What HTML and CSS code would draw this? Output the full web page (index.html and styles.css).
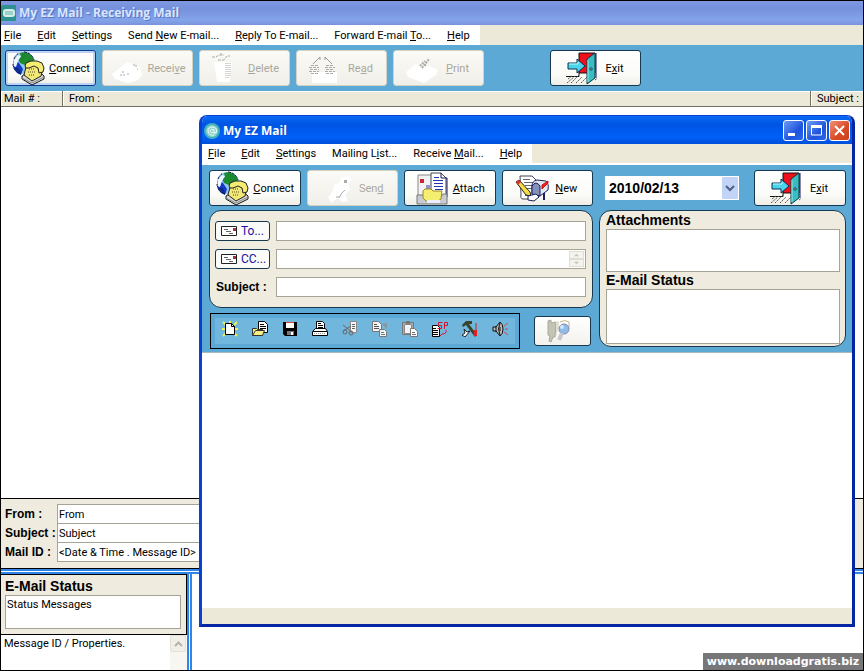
FILE: index.html
```html
<!DOCTYPE html>
<html lang="en">
<head>
<meta charset="utf-8">
<title>My EZ Mail - Receiving Mail</title>
<link rel="stylesheet" href="styles.css">
</head>
<body>
<svg class="sprite" aria-hidden="true">
  <symbol id="connect" viewBox="0 0 42 34">
    <circle cx="18" cy="12" r="11" fill="#8fc4ee"/>
    <path d="M8 9q-3 8 3 13l4 2 2-6-4-6z" fill="#1438c8"/>
    <path d="M14 2q8-3 13 5l1 6-5-2-4 3-5-2-2-4 3-2z" fill="#1c8a2c"/>
    <path d="M8 9l4-5 3 1-3 5-2 6-3-1z" fill="#eef6ff"/>
    <path d="M9 18l3 2 1 3 2 0-1-4-3-3z" fill="#0c2a80"/>
    <path d="M18 1a11 11 0 0 1 10 8M7 13a11 11 0 0 0 8 10M8 8a11 11 0 0 1 5-6" fill="none" stroke="#101840" stroke-dasharray="3 1"/>
    <path d="M16 25l13-8 9 8v3l-12 6-10-6z" fill="#d9d9d9" stroke="#111"/>
    <path d="M16 27l10 5 12-6" fill="none" stroke="#888"/>
    <path d="M18 24l2-8 9-3 7 8-1 4-9 5z" fill="#f2e878" stroke="#222"/>
    <path d="M19 15l1-3 5-2h6l5 2 2 5-1 4-4 1-1-5-4-2-5 2-3 0z" fill="#f5ec72" stroke="#222"/>
    <path d="M23 18h6M22 21h7M23 24h6" stroke="#54491a" stroke-dasharray="1 1"/>
  </symbol>
  <symbol id="exit" viewBox="0 0 46 34">
    <path d="M29 2h17v25h-3V4z" fill="#8d86ad"/>
    <path d="M28 2h16v20H28z" fill="#f0101c" stroke="#111"/>
    <path d="M15 25.500h13v-4M15 25.500" fill="none" stroke="#111"/>
    <path d="M17 28l4-3M16 32l8-7M20 32l8-8M25 32l6-6M30 32l6-6M44 29l4-3" stroke="#555" stroke-dasharray="2 1"/>
    <path d="M36 8l8-6v25l-8 6z" fill="#3bbcc0" stroke="#0b3c48"/>
    <path d="M37 9v22" stroke="#8ef0f0"/>
    <path d="M39 17h2v2h-2z" fill="#fff" stroke="#145"/>
    <path d="M17 12h9V8l8 7-8 7v-4h-9z" fill="#49d5ea" stroke="#0b2f50"/>
    <path d="M18 13h9v-2" fill="none" stroke="#b8f8ff"/>
  </symbol>
  <symbol id="letter" viewBox="0 0 17 10">
    <path d="M.5.5h15v9H.5z" fill="#fff" stroke="#222"/>
    <path d="M12 2h3v3h-3z" fill="#a33"/>
    <path d="M3 3.500h4M5 5.500h5M8 7.500h4" stroke="#666"/>
  </symbol>
</svg>

<main class="app">
  <header class="titlebar titlebar-inactive">
    <svg class="app-icon" viewBox="0 0 16 16"><path d="M1 0h14v16H0V2z" fill="#2f918f"/><rect x="2" y="4" width="12" height="8" rx="3" fill="#d3eeea"/><path d="M4 7h8M4 9h8" stroke="#6ab1aa"/></svg>
    <h1>My EZ Mail - Receiving Mail</h1>
  </header>
  <nav class="menubar">
    <div class="menu">
      <a href="#"><u>F</u>ile</a><a href="#"><u>E</u>dit</a><a href="#"><u>S</u>ettings</a><a href="#">Send <u>N</u>ew E-mail...</a><a href="#"><u>R</u>eply To E-mail...</a><a href="#">Forward E-mail <u>T</u>o...</a><a href="#"><u>H</u>elp</a>
    </div>
  </nav>
  <div class="toolbar">
    <button class="tool tool-default"><svg><use href="#connect"/></svg><span><u>C</u>onnect</span></button>
    <button class="tool" disabled><svg viewBox="0 0 42 34"><path d="M9 23l9-7 6-5 13 5 2 8-4 5-10 3-13-4z" fill="#fff"/><path d="M17 24h5M19 21h3M24 23h3M30 14h3v2M34 18h1" stroke="#aaa" stroke-dasharray="2 1" fill="none"/></svg><span>Recei<u>v</u>e</span></button>
    <button class="tool" disabled><svg viewBox="0 0 42 34"><path d="M14 11h18l-2 20H17z" fill="#fff"/><path d="M12 6h4l3-2h5M18 9h6l3-4h3M20 3h2" stroke="#aaa" stroke-dasharray="3 1" fill="none"/><path d="M26 12v16M28 12v16M30 12v14" stroke="#aaa" stroke-dasharray="1 1"/></svg><span><u>D</u>elete</span></button>
    <button class="tool" disabled><svg viewBox="0 0 42 34"><path d="M15 21h25v11H15z" fill="#fff"/><path d="M16 13l7-7v3M28 9V6l7 7" stroke="#999" fill="none"/><path d="M14 14.500h8M12 16.500h10M13 18.500h9M12 20.500h10M14 22.500h8M29 14.500h8M28 16.500h10M29 18.500h8M28 20.500h10M29 22.500h8" stroke="#aaa" stroke-dasharray="3 1"/></svg><span>Re<u>a</u>d</span></button>
    <button class="tool" disabled><svg viewBox="0 0 42 34"><path d="M12 21l10-8 6 3 8-1 8 4-2 5-12 8-16-6z" fill="#fff"/><path d="M28 17l7-9M26 15l5-5M30 14h3" stroke="#aaa" stroke-width="2" stroke-dasharray="2 1"/></svg><span><u>P</u>rint</span></button>
    <button class="tool tool-apart"><svg><use href="#exit" width="46" height="34"/></svg><span>E<u>x</u>it</span></button>
  </div>
  <section class="list">
    <table>
      <thead><tr><th class="col-num">Mail # :</th><th>From :</th><th class="col-subject">Subject :</th></tr></thead>
    </table>
  </section>
  <section class="details">
    <label for="d-from">From :</label><input id="d-from" value="From" readonly>
    <label for="d-subject">Subject :</label><input id="d-subject" value="Subject" readonly>
    <label for="d-id">Mail ID :</label><input id="d-id" value="&lt;Date &amp; Time . Message ID&gt;" readonly>
  </section>
  <section class="reader">
    <div class="side">
      <div class="status">
        <label class="heading" for="status">E-Mail Status</label>
        <textarea id="status" readonly>Status Messages</textarea>
      </div>
      <div class="props">
        <p>Message ID / Properties.</p>
        <div class="scroll"><button aria-label="Scroll up"><svg viewBox="0 0 9 6"><path d="M1 5l3.500-3.500L8 5" fill="none" stroke="#b4b4a8" stroke-width="2"/></svg></button></div>
      </div>
    </div>
    <div class="message"></div>
  </section>
  <footer class="watermark">www.downloadgratis.biz</footer>
</main>

<section class="window">
  <header class="titlebar">
    <svg class="app-icon" viewBox="0 0 16 16"><circle cx="8" cy="8" r="8" fill="#43b0bd"/><circle cx="8" cy="8" r="6" fill="#8cd3cc"/><path d="M10 6v4h2q2-5-3-6-5 0-5 4 1 5 6 4M10 7q-3-2-4 1 1 3 4 1" fill="none" stroke="#eefcf8"/></svg>
    <h2>My EZ Mail</h2>
    <div class="caption-buttons">
      <button aria-label="Minimize"><svg viewBox="0 0 19 19"><path d="M4 12h7v3H4z" fill="#fff"/></svg></button>
      <button aria-label="Maximize"><svg viewBox="0 0 19 19"><path d="M4.500 5h10v9h-10z" fill="none" stroke="#fff"/><path d="M4 4h11v3H4z" fill="#fff"/></svg></button>
      <button class="close" aria-label="Close"><svg viewBox="0 0 19 19"><path d="M5 5l9 9M14 5l-9 9" stroke="#fff" stroke-width="2"/></svg></button>
    </div>
  </header>
  <nav class="menubar menubar-lined">
    <div class="menu">
      <a href="#"><u>F</u>ile</a><a href="#"><u>E</u>dit</a><a href="#"><u>S</u>ettings</a><a href="#">Mailing L<u>i</u>st...</a><a href="#">Receive <u>M</u>ail...</a><a href="#"><u>H</u>elp</a>
    </div>
  </nav>
  <div class="compose">
    <div class="compose-main">
      <div class="tools">
        <button class="tool"><svg><use href="#connect"/></svg><span><u>C</u>onnect</span></button>
        <button class="tool" disabled><svg viewBox="0 0 42 34"><path d="M20 26l5-6 1-6 5-2 2-5 8-2 3 4-4 4 2 6-5 5 3 6-6 1-4-4-7 5z" fill="#fff"/><path d="M36 9h3v3h-3z" fill="#aaa"/><path d="M31 27l2-4 4-4M28 26h3" stroke="#aaa" fill="none"/></svg><span>Sen<u>d</u></span></button>
        <button class="tool"><svg viewBox="0 0 42 34"><path d="M13 4h17v24H13z" fill="#f2f2f5" stroke="#888"/><path d="M15 8h4v4h-4z" fill="#c23"/><path d="M21 15h4M21 17h4" stroke="#33a"/><path d="M26 2h10l5 5v18H26z" fill="#fff" stroke="#445"/><path d="M36 2v5h6v19" fill="none" stroke="#1a1a60"/><path d="M29 6.500h5M28 9.500h10M29 12.500h9M29 15.500h9M30 18.500h8" stroke="#2338b0"/><path d="M12 24l6 0 3 3h14l3-4 4 0v10H12z" fill="#c9cbd4" stroke="#777"/><path d="M18 20l2-2h6l2 2h9l-1 8-3 2H21l-3-3z" fill="#f5ee70" stroke="#998a20"/><path d="M22 29h13v3H22z" fill="#eef"/></svg><span><u>A</u>ttach</span></button>
        <button class="tool"><svg viewBox="0 0 42 34"><path d="M17 5h12l4 4v19H20q-3 0-2-5z" fill="#fff" stroke="#445"/><path d="M20 8.500h7M21 11.500h9M22 14.500h8M23 17.500h6M22 24.500h6" stroke="#667"/><path d="M13 11l3-2 11 12 1 4-5-1z" fill="#f4dc45" stroke="#222"/><path d="M13 11l3-2 2 2-3 3z" fill="#d33"/><path d="M29 15q0-5 5-6l9 1q3 2 2 9l-8 6-8-2z" fill="#e2e6f2" stroke="#1a205a"/><path d="M29 15q4-6 8 0v10l-8-2z" fill="#8490bc" stroke="#1a205a"/><path d="M25 25l8-2 3 3-5 4-6-1z" fill="#fff" stroke="#1a205a"/><path d="M39 18l6-6v-2l-6 4z" fill="#e22" stroke="#c11"/><path d="M41 22v7" stroke="#1a205a" stroke-width="2"/></svg><span><u>N</u>ew</span></button>
      </div>
      <div class="panel fields">
        <button class="address"><svg><use href="#letter"/></svg>To...</button><input aria-label="To">
        <button class="address"><svg><use href="#letter"/></svg>CC...</button>
        <div class="spin-field"><input aria-label="CC"><div class="spin"><button aria-label="Up"><svg viewBox="0 0 14 7"><path d="M4 5l3-3 3 3z" fill="#c6c5bb"/></svg></button><button aria-label="Down"><svg viewBox="0 0 14 7"><path d="M4 2l3 3 3-3z" fill="#c6c5bb"/></svg></button></div></div>
        <label for="subject">Subject :</label><input id="subject">
      </div>
      <div class="actions">
        <div class="iconbar">
          <button aria-label="New"><svg viewBox="0 0 16 16"><path d="M1 1l3 3M8 0v3M15 1l-3 3M0 8h3M13 8h3M1 15l3-3M15 15l-3-3" stroke="#f0f050" stroke-width="2"/><path d="M3.500 2.500h6l3 3v8h-9z" fill="#fff" stroke="#000"/><path d="M9.500 2.500v3h3" fill="none" stroke="#000"/></svg></button>
          <button aria-label="Open"><svg viewBox="0 0 16 16"><path d="M6.500.5h6l3 3v8h-9z" fill="#fff" stroke="#000"/><path d="M8 3.500h4M8 5.500h6M8 7.500h6" stroke="#000"/><path d="M.5 7.500h4l1 1h5v6H.5z" fill="#f5f080" stroke="#333"/><path d="M.5 14.500l3-5h9l-2 5z" fill="#f5f080" stroke="#333"/></svg></button>
          <button aria-label="Save"><svg viewBox="0 0 16 16"><path d="M1 1h14v14H3l-2-2z"/><path d="M4 1h8v6H4z" fill="#fff"/><path d="M4 1h8v1H4z" fill="#d44"/><path d="M5 10h7v4H5z" fill="#777"/><path d="M9 11h2v3H9z" fill="#fff"/></svg></button>
          <button aria-label="Print"><svg viewBox="0 0 16 16"><path d="M4.500.5h6l2 2v6h-8z" fill="#fff" stroke="#000"/><path d="M6 2.500h3M6 4.500h5M6 6.500h5" stroke="#000"/><path d="M.5 10.500l3-3h10l2 3v4H.5z" fill="#fff" stroke="#000"/><path d="M1 10.500h14" stroke="#000"/><path d="M2 12.500h12" stroke="#999" stroke-dasharray="1 1"/></svg></button>
          <button aria-label="Cut"><svg viewBox="0 0 16 16"><path d="M8.500.5h6v11h-6z" fill="#f4f6f8" stroke="#888"/><path d="M10 3.500h3M10 5.500h3M10 7.500h3" stroke="#666"/><path d="M1 4l9 7M1 10l8-5" stroke="#666"/><circle cx="3" cy="11" r="2" fill="none" stroke="#666"/><circle cx="9" cy="12" r="2" fill="none" stroke="#666"/></svg></button>
          <button aria-label="Copy"><svg viewBox="0 0 16 16"><path d="M.5.500h6l3 3v7h-9z" fill="#f4f4f4" stroke="#777"/><path d="M2 3.500h3M2 5.500h5M2 7.500h5" stroke="#555"/><path d="M10 3l5 5V2z" fill="#8a94a0"/><path d="M7.500 8.500h5l2 2v5h-7z" fill="#f4f4f4" stroke="#777"/><path d="M9 11.500h3M9 13.500h4" stroke="#777"/></svg></button>
          <button aria-label="Paste"><svg viewBox="0 0 16 16"><path d="M.5 1.500h11v12H.5z" fill="#a8adb0" stroke="#777"/><path d="M2.500 3.500h7v9h-7z" fill="#f4f4f4" stroke="#888"/><path d="M4 0h4v3H4z" fill="#777"/><path d="M8.500 7.500h4l3 3v5h-7z" fill="#fff" stroke="#777"/><path d="M10 11.500h3M10 13.500h4" stroke="#777"/></svg></button>
          <button aria-label="Spelling"><svg viewBox="0 0 16 16"><path d="M.5 4.500h5l2 2v9h-7z" fill="#fff" stroke="#000"/><path d="M1 7.500h3M1 9.500h5M1 11.500h5M1 13.500h5" stroke="#000"/><path d="M10.500 1.500h-4v3h3v3h-4M12.500 8V1.500h3v3h-3M14 9q1 4-4 4l-2 2" fill="none" stroke="#d8142c"/></svg></button>
          <button aria-label="Tools"><svg viewBox="0 0 16 16"><path d="M0 4l4-4h6v3H7l8 11-2 2L4 4 1 6z" fill="#38452c"/><path d="M14 2v7" stroke="#c22"/><path d="M12 9h3v6h-3z" fill="#d22"/><path d="M2 8l3 3 3-1-5 6-3-2 3-2z" fill="#fff" stroke="#222"/></svg></button>
          <button aria-label="Sound"><svg viewBox="0 0 16 16"><path d="M1 6h3l4-5q3 2 3 7t-3 7L4 10H1z" fill="#bbb" stroke="#111"/><path d="M4 5v6M8 2q-3 6 0 12M8 6v4" fill="none" stroke="#111"/><path d="M12 5l4-3M13 8h3M12 11l4 3" stroke="#d44"/></svg></button>
        </div>
        <button class="search" aria-label="Search"><svg viewBox="0 0 24 24"><path d="M1 2l3-1v3l5-1-1 15-2 0-2 5-2-1 1-5-2-1z" fill="#c4c4b6" stroke="#aaa99b"/><path d="M9 3l3-1v6l-3 9z" fill="#deded2"/><path d="M13 3q5-3 9 0v5" fill="none" stroke="#c4b68c"/><circle cx="17" cy="10" r="5" fill="#8fbde8" stroke="#88a"/><path d="M15 14l-3 7" stroke="#c9c9cf" stroke-width="4"/><circle cx="15" cy="8" r="2" fill="#d0e8fa"/></svg></button>
      </div>
    </div>
    <div class="compose-side">
      <div class="tools tools-split">
        <div class="date"><select aria-label="Date"><option>2010/02/13</option></select><svg viewBox="0 0 16 22"><rect width="16" height="22" rx="1" fill="#c2d3f8"/><path d="M4 9l4 4 4-4" fill="none" stroke="#4d6185" stroke-width="2"/></svg></div>
        <button class="tool"><svg><use href="#exit" width="46" height="34"/></svg><span>E<u>x</u>it</span></button>
      </div>
      <div class="panel info">
        <label class="heading" for="attachments">Attachments</label>
        <textarea id="attachments"></textarea>
        <label class="heading" for="mail-status">E-Mail Status</label>
        <textarea id="mail-status" class="tall"></textarea>
      </div>
    </div>
  </div>
  <div class="editor"></div>
  <footer class="statusbar"></footer>
</section>
</body>
</html>
```
FILE: styles.css
```css
:root {
  --sand: #ece9d8;
  --panel: #efebde;
  --sky: #5ba9d4;
  --ink: #17394f;
}
* { box-sizing: border-box; }
body {
  margin: 0;
  position: relative;
  font: 11px/14px Roboto, "Liberation Sans", sans-serif;
  color: #000;
}
button, input, textarea, select { font: inherit; color: inherit; margin: 0; }
button { padding: 0; }
input, textarea {
  display: block;
  width: 100%;
  min-width: 0;
  padding: 0 1px;
  border: 1px solid #a5a496;
  border-radius: 0;
  background: #fff;
  resize: none;
  outline: 0;
}
h1, h2, p { margin: 0; }
a { color: inherit; text-decoration: none; }
.sprite { display: none; }

.app {
  height: 100vh;
  min-height: 600px;
  display: flex;
  flex-direction: column;
  border: 1px solid #000;
  background: #fff;
}
.titlebar {
  display: flex;
  align-items: center;
  gap: 3px;
  height: 28px;
  padding: 0 2px 0 2px;
  background: linear-gradient(#0a6cf5, #0054e3 30%, #0060f8 75%, #0050d8);
  color: #fff;
}
.titlebar-inactive {
  gap: 2px;
  height: 24px;
  padding: 0;
  background: linear-gradient(#8098e2, #7590dc 30%, #84a4ea 80%, #7a92dc);
  color: #dce6fa;
}
.app-icon { width: 16px; height: 16px; }
h1, h2 { font: bold 12px/16px "Open Sans", sans-serif; text-shadow: 1px 1px #0a3a9a66; }
.menubar { background: var(--sand); height: 20px; display: flex; flex: none; }
.menubar-lined { border-bottom: 2px solid #fff; height: 21px; }
.menu {
  display: flex;
  align-items: center;
  gap: 16px;
  padding: 1px 10px 0 3px;
  background: #fff;
}
.window .menu { padding-left: 6px; }
.toolbar {
  flex: none;
  display: flex;
  gap: 6px;
  height: 46px;
  padding: 5px 4px;
  background: var(--sky);
}
.tool {
  display: flex;
  align-items: center;
  width: 91px;
  height: 36px;
  border: 1px solid var(--ink);
  border-radius: 3px;
  background: linear-gradient(#fff, #fbfbf8 70%, #eeede6);
}
.tool svg { width: 42px; height: 34px; flex: none; overflow: visible; }
.tool span { flex: 1; padding: 2px 4px 0 0; text-align: center; }
.tool:disabled { color: #a9a89c; border-color: #d5d2c2; background: linear-gradient(#fafaf6, #f1efe9); }
.tool-default { border-color: #123a8c; box-shadow: inset 0 0 0 2px #bcd3f5; }
.tool-apart { margin-left: 60px; }

.list { flex: 1; min-height: 0; }
table { width: 100%; border-collapse: separate; border-spacing: 0; table-layout: fixed; }
th {
  height: 16px;
  padding: 1px 0 0 6px;
  border-right: 1px solid #716f64;
  border-bottom: 1px solid #716f64;
  background: var(--sand);
  box-shadow: inset 1px 1px #fff;
  font-weight: normal;
  line-height: 14px;
  text-align: left;
}
th:last-child { border-right: 0; }
.col-num { width: 62px; padding-left: 3px; }
.col-subject { width: 52px; }

.details {
  flex: none;
  display: grid;
  grid-template-columns: 52px 1fr;
  align-items: center;
  padding: 5px 12px 7px 4px;
  border: solid #000;
  border-width: 1px 0;
  background: var(--panel);
}
.details label, .fields label { font: bold 12px/16px "Liberation Sans", sans-serif; white-space: nowrap; }
.details input { height: 20px; margin-bottom: -1px; }
.details label { height: 19px; padding-top: 2px; }
.reader {
  flex: none;
  display: flex;
  height: 101px;
  border-top: 5px double #2f86e8;
}
.side { width: 186px; flex: none; display: flex; flex-direction: column; }
.status {
  height: 61px;
  padding: 2px 5px 4px 4px;
  border: solid #000;
  border-width: 1px 1px 1px 0;
  background: var(--panel);
}
.heading { display: block; font: bold 14px/18px "Liberation Sans", sans-serif; }
.status textarea { height: 34px; padding: 2px 1px; }
.props { flex: 1; display: flex; justify-content: space-between; padding-left: 3px; }
.props p { padding-top: 2px; }
.scroll { width: 17px; background: #f7f6f1; }
.scroll button {
  display: grid;
  place-items: center;
  width: 16px;
  height: 17px;
  border: 1px solid #e4e2d6;
  border-radius: 2px;
  background: #f0efe8;
}
.scroll svg { width: 9px; height: 6px; }
.message { flex: 1; border-left: 5px double #2f86e8; }
.watermark {
  position: absolute;
  right: 1px;
  bottom: 1px;
  width: 160px;
  padding: 1px 2px;
  background: #77777a;
  color: #fff;
  font: bold 11px/15px "DejaVu Sans", sans-serif;
  text-align: center;
  white-space: nowrap;
}

/* Compose window floating over the mailbox */
.window {
  position: absolute;
  inset: 115px 9px 44px 199px;
  display: flex;
  flex-direction: column;
  border: 3px solid #0a3fd0;
  border-top-width: 1px;
  border-right-color: #0526a4;
  border-bottom-color: #0526a4;
  border-radius: 8px 8px 0 0;
  background: #fff;
  overflow: hidden;
}
.window h2 { margin-top: 2px; }
.window .app-icon { margin-top: 1px; }
.caption-buttons { display: flex; gap: 2px; margin-left: auto; }
.caption-buttons button {
  width: 21px;
  height: 21px;
  border: 1px solid #fff;
  border-radius: 3px;
  background: linear-gradient(135deg, #6d9cf5, #1f54dc 60%, #2c66ee);
}
.caption-buttons .close { background: linear-gradient(135deg, #f09078, #d84a24 60%, #c8421c); }
.caption-buttons svg { display: block; width: 19px; height: 19px; }
.compose {
  display: flex;
  gap: 6px;
  padding: 5px 6px 3px 7px;
  background: var(--sky);
  border-bottom: 1px solid #a7b8bf;
}
.compose-main { flex: 384; min-width: 0; }
.compose-side { flex: 247; min-width: 0; }
.tools { display: flex; gap: 6px; margin-bottom: 4px; }
.tools .tool { flex: 0 1 92px; min-width: 0; }
.tools-split { justify-content: space-between; align-items: center; padding-left: 6px; }
.date { display: grid; width: 134px; height: 24px; background: #fff; }
.date select, .date svg { grid-area: 1 / 1; }
.date select {
  appearance: none;
  width: 100%;
  padding: 0 4px;
  border: 0;
  border-radius: 0;
  background: none;
  font: bold 14px/22px "Liberation Sans", sans-serif;
}
.date svg { justify-self: end; align-self: center; width: 16px; height: 22px; margin-right: 1px; pointer-events: none; }
.panel { border: 1px solid var(--ink); border-radius: 12px; background: var(--panel); }
.fields {
  display: grid;
  grid-template-columns: 55px 1fr;
  gap: 8px 6px;
  align-items: center;
  padding: 10px 6px 10px 5px;
}
.fields input { height: 20px; }
.address {
  display: flex;
  align-items: center;
  gap: 3px;
  height: 20px;
  padding: 0 5px;
  border: 1px solid var(--ink);
  border-radius: 3px;
  background: #fbfbf9;
  color: #1414a0;
  font-size: 12px;
}
.address svg { flex: none; width: 17px; height: 10px; }
.fields label { padding-left: 1px; }
.spin-field { display: grid; }
.spin-field > * { grid-area: 1 / 1; }
.spin { justify-self: end; display: grid; padding: 2px; width: 19px; }
.spin button { height: 8px; border: 1px solid #e0ded2; background: #f4f3ee; }
.spin svg { display: block; width: 13px; height: 6px; }
.actions { display: flex; align-items: center; gap: 14px; padding: 5px 2px 0 1px; }
.iconbar {
  flex: 1;
  display: flex;
  justify-content: space-between;
  align-items: center;
  height: 36px;
  padding: 0 10px 4px;
  border: 1px solid #000;
  background: #71b6dc;
  box-shadow: inset 0 0 0 4px var(--sky);
}
.iconbar button { width: 18px; height: 20px; border: 0; background: none; }
.iconbar svg { display: block; width: 16px; height: 16px; margin: auto; }
.search {
  width: 57px;
  height: 30px;
  border: 1px solid var(--ink);
  border-radius: 3px;
  background: linear-gradient(#fff, #f2f1ec);
}
.search svg { display: block; width: 24px; height: 24px; margin: 0 auto 0 12px; }
.info { height: 137px; padding: 1px 5px 0 6px; }
.info textarea { height: 43px; }
.info .heading { line-height: 17px; }
.info .tall { height: 55px; }
.editor { flex: 1; }
.statusbar { height: 16px; background: var(--sand); }
```
